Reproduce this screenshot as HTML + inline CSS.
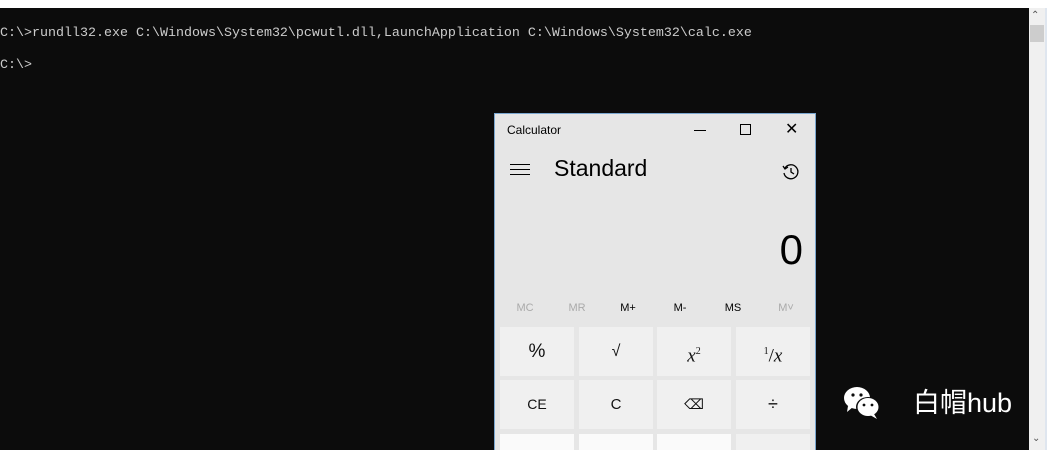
<!DOCTYPE html>
<html style="overflow:hidden;width:1047px;height:450px"><head><meta charset="utf-8"><style>
*{margin:0;padding:0;box-sizing:border-box}
body{width:1047px;height:450px;overflow:hidden;background:#0c0c0c;position:relative;font-family:"Liberation Sans",sans-serif}
.top{position:absolute;left:0;top:0;width:1047px;height:8px;background:#fff}
.con{position:absolute;left:0;top:26px;color:#cccccc;font-family:"Liberation Mono",monospace;font-size:13.33px;line-height:16px;white-space:pre}
.sb{position:absolute;left:1029px;top:8px;width:16px;height:442px;background:#f0f0f0}
.thumb{position:absolute;left:1030px;top:25px;width:14px;height:17px;background:#cdcdcd}
.rb{position:absolute;left:1045px;top:8px;width:2px;height:442px;background:#dfe6ef}
.calc{position:absolute;left:494px;top:113px;width:322px;height:337px;background:#e6e6e6;border:1px solid #7aa7d0;border-bottom:none;overflow:hidden}
.t{position:absolute;font-size:12px;color:#000}
.btn{position:absolute;width:74px;height:49px;background:#f0f0f0;text-align:center;line-height:49px;font-size:16px;color:#111}
.m{position:absolute;top:188px;font-size:11px;width:50px;text-align:center}
.wx{position:absolute;top:386px;color:#fff;font-size:27px;line-height:34px;font-family:"Liberation Sans","Noto Sans CJK SC",sans-serif}
</style></head><body>
<div class="top"></div>
<div class="con">C:\>rundll32.exe C:\Windows\System32\pcwutl.dll,LaunchApplication C:\Windows\System32\calc.exe

C:\></div>
<div class="sb"></div><div class="thumb"></div><div class="rb"></div>
<div style="position:absolute;left:1031px;top:11px;color:#555;font-size:10px;line-height:10px">&#8963;</div>
<div style="position:absolute;left:1032px;top:434px;color:#555;font-size:10px;line-height:10px">&#8964;</div>
<div class="calc">
<div class="t" style="left:12px;top:9px;font-size:12px">Calculator</div>
<div style="position:absolute;left:199px;top:16px;width:12px;height:1px;background:#000"></div>
<div style="position:absolute;left:245px;top:10px;width:11px;height:11px;border:1px solid #000"></div>
<div style="position:absolute;left:290px;top:5px;font-size:16px">✕</div>
<div style="position:absolute;left:15px;top:50px;width:20px;height:1px;background:#000;box-shadow:0 5px 0 #000,0 10px 0 #000"></div>
<div class="t" style="left:59px;top:41px;font-size:23px">Standard</div>
<svg style="position:absolute;left:287px;top:49px" width="18" height="18" viewBox="0 0 18 18"><path d="M3 5 A7 7 0 1 1 2 10" fill="none" stroke="#000" stroke-width="1.3"/><path d="M1 3 L3 6 L6 4" fill="none" stroke="#000" stroke-width="1.3"/><path d="M9 5 V9 L12 11" fill="none" stroke="#000" stroke-width="1.3"/></svg>
<div class="t" style="right:12px;top:112px;font-size:42px">0</div>
<div class="m" style="left:5px;color:#aaa">MC</div>
<div class="m" style="left:57px;color:#aaa">MR</div>
<div class="m" style="left:108px">M+</div>
<div class="m" style="left:160px">M-</div>
<div class="m" style="left:213px">MS</div>
<div class="m" style="left:266px;color:#aaa">M˅</div>
<div class="btn" style="left:5px;top:213px;font-size:19px">%</div>
<div class="btn" style="left:84px;top:213px">√</div>
<div class="btn" style="left:162px;top:213px;font-family:'Liberation Serif',serif;font-style:italic;font-size:19px">x<sup style="font-size:10px;font-style:normal">2</sup></div>
<div class="btn" style="left:241px;top:213px;font-family:'Liberation Serif',serif;font-size:19px"><sup style="font-size:10px">1</sup>/<i>x</i></div>
<div class="btn" style="left:5px;top:266px;font-size:14px">CE</div>
<div class="btn" style="left:84px;top:266px;font-size:15px">C</div>
<div class="btn" style="left:162px;top:266px;font-size:14px">⌫</div>
<div class="btn" style="left:241px;top:266px;font-size:18px">÷</div>
<div class="btn" style="left:5px;top:320px;height:17px;background:#fafafa"></div>
<div class="btn" style="left:84px;top:320px;height:17px;background:#fafafa"></div>
<div class="btn" style="left:162px;top:320px;height:17px;background:#fafafa"></div>
<div class="btn" style="left:241px;top:320px;height:17px"></div>
</div>
<svg style="position:absolute;left:843px;top:385px" width="40" height="36" viewBox="0 0 40 36"><ellipse cx="14" cy="13" rx="13" ry="11" fill="#fff"/><path d="M5 21 L4 27 L10 22Z" fill="#fff"/><ellipse cx="25" cy="22" rx="12" ry="10" fill="#0c0c0c"/><ellipse cx="25" cy="22" rx="10.5" ry="9" fill="#fff"/><path d="M31 29 L34 34 L27 30Z" fill="#fff"/><circle cx="10" cy="10" r="1.6" fill="#0c0c0c"/><circle cx="18" cy="10" r="1.6" fill="#0c0c0c"/><circle cx="21" cy="20" r="1.4" fill="#0c0c0c"/><circle cx="29" cy="20" r="1.4" fill="#0c0c0c"/></svg>
<div class="wx" style="left:913px">白帽hub</div>
</body></html>
